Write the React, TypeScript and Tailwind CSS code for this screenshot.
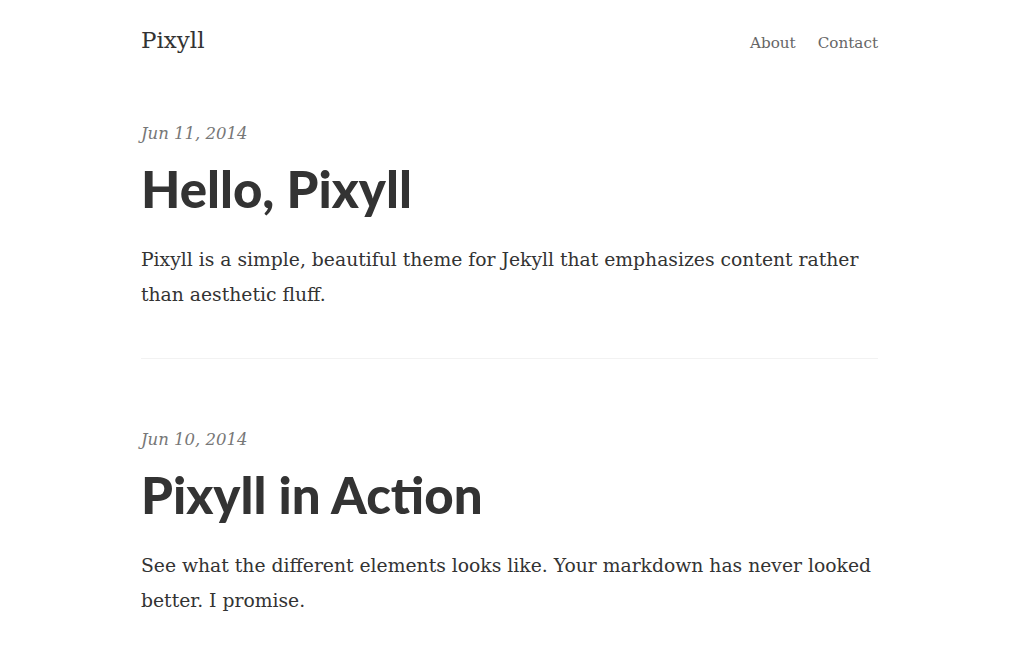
import React from "react";

const serif = { fontFamily: '"DejaVu Serif", "Liberation Serif", serif' };

function Post({ date, title, summary }: { date: string; title: string; summary: string }) {
  return (
    <article className="flex flex-col">
      <div className="text-[16.5px] italic text-[#777] leading-[30px] font-['DejaVu_Serif',serif]">{date}</div>
      <h1 className="mt-[10px] text-[51px] font-black leading-[60px] text-[#333] font-['Lato',sans-serif]">{title}</h1>
      <p className="mt-[23px] text-[18.75px] leading-[35px] text-[#333] font-['DejaVu_Serif',serif]">{summary}</p>
    </article>
  );
}

export default function App() {
  return (
    <div className="min-h-[651px] bg-white" style={serif}>
      <div className="ml-[141px] w-[737px]">
        <header className="flex items-center justify-between pt-[24px]">
          <div className="text-[23px] text-[#333] leading-[32px] font-['DejaVu_Serif',serif]">Pixyll</div>
          <nav className="flex gap-[22px] pt-[6px] text-[15.2px] text-[#666] font-['DejaVu_Serif',serif]">
            <span>About</span>
            <span>Contact</span>
          </nav>
        </header>
        <div className="mt-[63px]">
          <Post
            date="Jun 11, 2014"
            title="Hello, Pixyll"
            summary="Pixyll is a simple, beautiful theme for Jekyll that emphasizes content rather than aesthetic fluff."
          />
        </div>
        <div className="mt-[46px] border-t border-[#f2f2f2]" />
        <div className="mt-[66px]">
          <Post
            date="Jun 10, 2014"
            title="Pixyll in Action"
            summary="See what the different elements looks like. Your markdown has never looked better. I promise."
          />
        </div>
      </div>
    </div>
  );
}
